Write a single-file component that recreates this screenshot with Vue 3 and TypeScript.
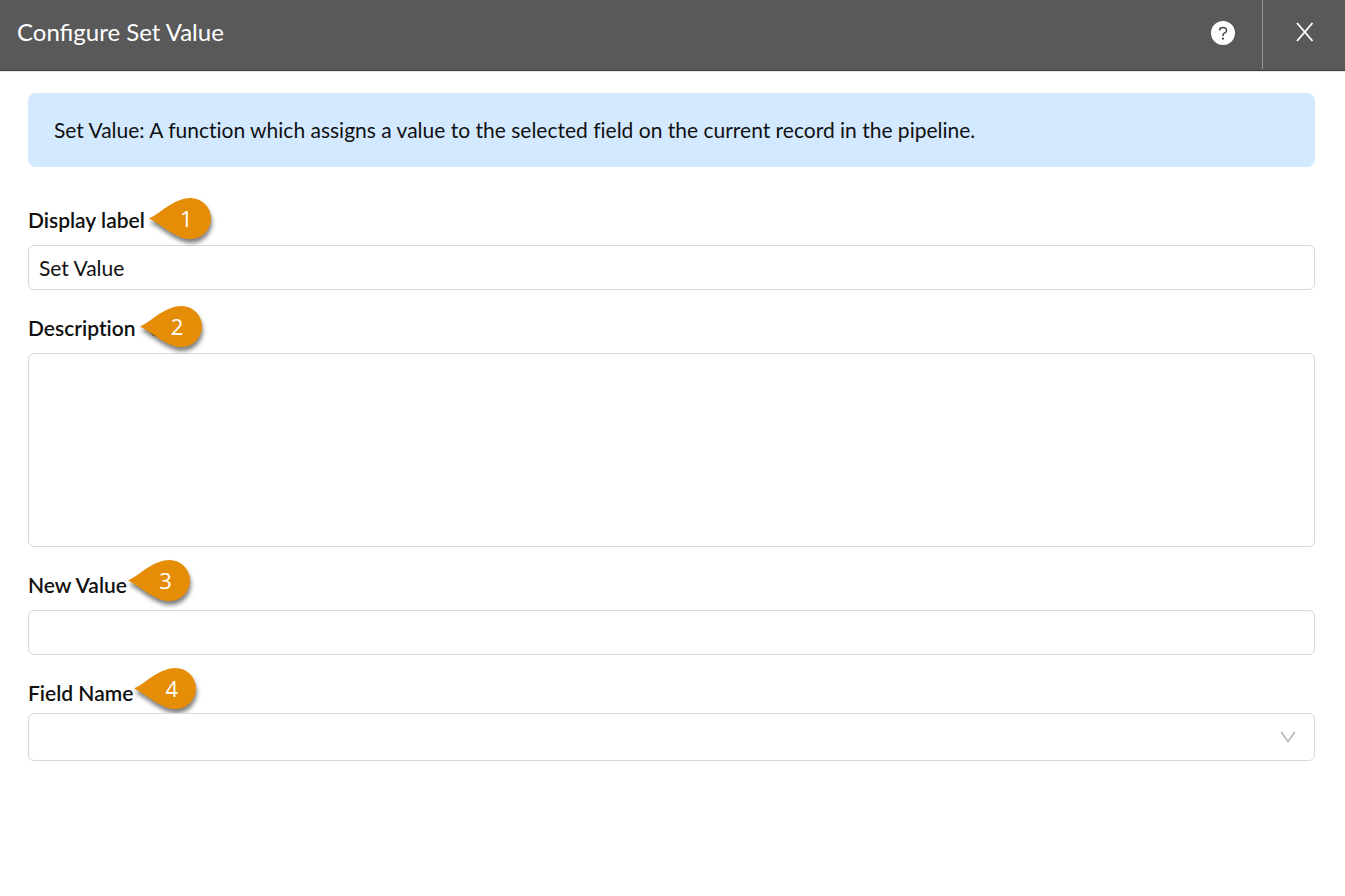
<script setup lang="ts">
import { ref } from 'vue'

const displayLabel = ref('Set Value')
const description = ref('')
const newValue = ref('')
const fieldName = ref('')

type Kind = 'text' | 'area' | 'select'
interface Field {
  id: string
  label: string
  kind: Kind
  raised?: boolean
  info?: boolean
}

const fields: Field[] = [
  { id: 'display-label', label: 'Display label', kind: 'text' },
  { id: 'description', label: 'Description', kind: 'area', info: true },
  { id: 'new-value', label: 'New Value', kind: 'text', raised: true },
  { id: 'field-name', label: 'Field Name', kind: 'select', raised: true },
]

const models: Record<string, typeof displayLabel> = {
  'display-label': displayLabel,
  description,
  'new-value': newValue,
  'field-name': fieldName,
}
</script>

<template>
  <div class="dialog">
    <header class="bar">
      <h1 class="title">Configure Set Value</h1>
      <button class="help" type="button" aria-label="Help">
        <svg width="24" height="24" viewBox="0 0 24 24" aria-hidden="true">
          <circle cx="12" cy="12" r="12" fill="#fff" />
          <path d="M8.600 9.600V9.200C8.600 7.500 10 6.500 12 6.500s3.500 1.100 3.500 2.900c0 1.400-.9 2.200-2.100 2.800-1 .5-1.400 1-1.400 1.900v.8" fill="none" stroke="#444" stroke-width="1.500" />
          <circle cx="12" cy="17.700" r="1.100" fill="#444" />
        </svg>
      </button>
      <button class="close" type="button" aria-label="Close">
        <svg width="18" height="20" viewBox="0 0 18 20" aria-hidden="true">
          <path d="M1 1l15.500 18M16.500 1L1 19" fill="none" stroke="#fff" stroke-width="1.900" />
        </svg>
      </button>
    </header>

    <main class="body">
      <p class="notice">Set Value: A function which assigns a value to the selected field on the current record in the pipeline.</p>

      <form class="form" @submit.prevent>
        <div v-for="(f, i) in fields" :key="f.id" class="field" :class="'field--' + f.kind">
          <div class="caption">
            <label :for="f.id">{{ f.label }}</label>
            <span class="pin" :class="{ 'pin--raised': f.raised }">
              <svg class="shape" width="62" height="42" viewBox="0 0 62 42" aria-hidden="true">
                <circle v-if="f.info" cx="17" cy="23" r="7.500" fill="#555" />
                <path class="drop" d="M0 20.500C8 16.500 13 12 20 7.500C27 3.200 34 0 41.500 0A20.500 20.500 0 0 1 41.500 41C34 41 27 37.500 20 33.200C13 28.800 7 24 0 20.500Z" fill="#e68d08" />
              </svg>
              <span class="num">{{ i + 1 }}</span>
            </span>
          </div>
          <input v-if="f.kind === 'text'" :id="f.id" v-model="models[f.id].value" class="control" type="text" />
          <textarea v-else-if="f.kind === 'area'" :id="f.id" v-model="models[f.id].value" class="control area"></textarea>
          <div v-else class="picker">
            <select :id="f.id" v-model="models[f.id].value" class="control select">
              <option value=""></option>
            </select>
            <svg class="chevron" width="16" height="12" viewBox="0 0 16 12" aria-hidden="true">
              <path d="M1.200 1L8 10.500L14.800 1" fill="none" stroke="#b3b3b3" stroke-width="1.500" />
            </svg>
          </div>
        </div>
      </form>
    </main>
  </div>
</template>

<style>
body {
  margin: 0;
  background: #fff;
}
</style>

<style scoped>
.dialog {
  min-height: 100vh;
  font-family: Lato, "Liberation Sans", sans-serif;
  font-size: 21px;
  line-height: 32px;
  color: #111;
}

.bar {
  display: flex;
  align-items: flex-start;
  box-sizing: border-box;
  height: 71px;
  border-bottom: 1px solid #404040;
  background: #595959;
  box-shadow: 0 1px 0 #e4e4e4;
}

.title {
  flex: 1;
  margin: 0;
  padding: 16px 17px;
  font-size: 24px;
  font-weight: 400;
  color: #fff;
}

.help,
.close {
  display: flex;
  padding: 0;
  border: 0;
  background: none;
  cursor: pointer;
}

.help {
  padding: 21px 27px;
}

.close {
  box-sizing: border-box;
  width: 83px;
  height: 69px;
  padding: 22px 0 0 2px;
  justify-content: center;
  border-left: 1px solid #8f9aa5;
}

.body {
  padding: 22px 30px 24px 28px;
  font-variant-ligatures: none;
}

.notice {
  margin: 0;
  padding: 21px 26px;
  border-radius: 8px;
  background: #d3e9ff;
}

.form {
  display: flex;
  flex-direction: column;
  gap: 22px;
  padding-top: 37px;
}

.field {
  display: flex;
  flex-direction: column;
  gap: 9px;
}

.field--select {
  gap: 4px;
}

.caption {
  position: relative;
  align-self: flex-start;
  font-weight: 600;
}

.caption label {
  display: block;
}

.pin {
  position: absolute;
  top: -6px;
  left: 100%;
  width: 62px;
  height: 42px;
  margin-left: 4px;
}

.pin--raised {
  top: -9px;
  margin-left: 1px;
}

.shape {
  display: block;
  overflow: visible;
}

.drop {
  filter: drop-shadow(1px 4px 2px rgba(0, 0, 0, 0.5));
}

.num {
  position: absolute;
  inset: 0;
  padding-left: 13px;
  font-family: "Open Sans", "Noto Sans", sans-serif;
  font-size: 22px;
  font-weight: 400;
  line-height: 40px;
  text-align: center;
  color: #fff;
}

.control {
  box-sizing: border-box;
  display: block;
  width: 100%;
  height: 45px;
  margin: 0;
  padding: 0 10px;
  border: 1px solid #d9d9d9;
  border-radius: 6px;
  outline: none;
  background: #fff;
  font: inherit;
  color: #111;
}

.area {
  height: 194px;
  padding: 6px 10px;
  resize: none;
}

.select {
  height: 48px;
  appearance: none;
}

.picker {
  position: relative;
}

.chevron {
  position: absolute;
  top: 18px;
  right: 19px;
  pointer-events: none;
}
</style>
